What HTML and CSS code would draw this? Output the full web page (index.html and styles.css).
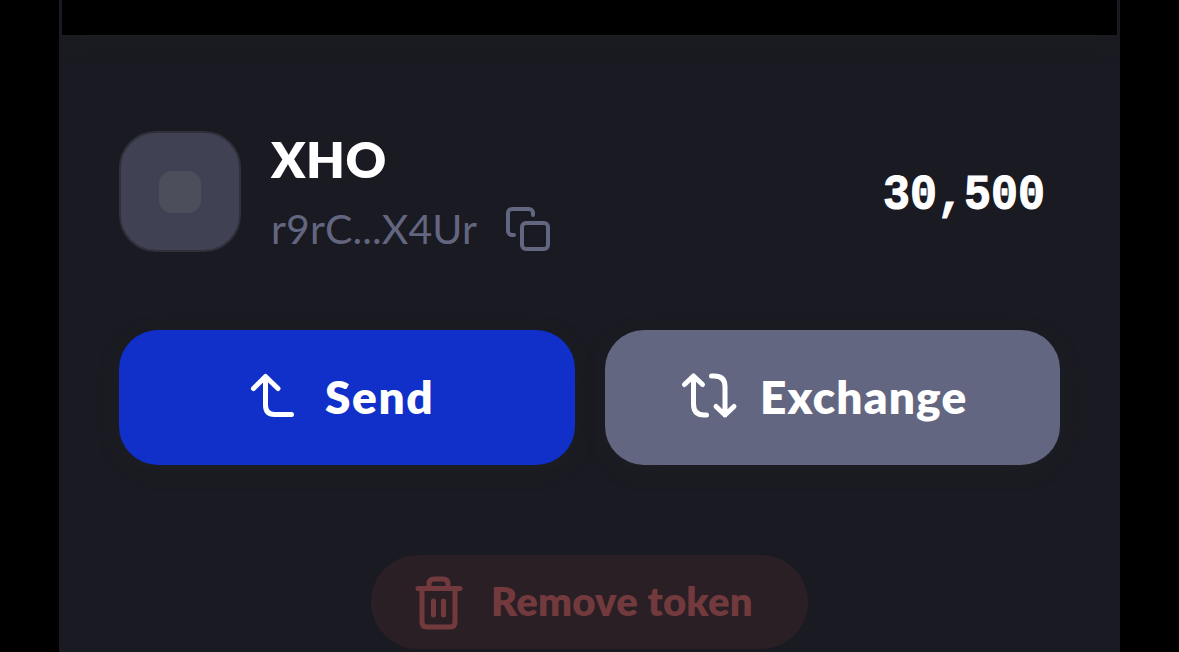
FILE: index.html
```html
<!DOCTYPE html>
<html lang="en">
<head>
    <meta charset="UTF-8">
    <meta name="viewport" content="width=device-width, initial-scale=1.0">
    <title>XHO</title>
    <link rel="stylesheet" href="styles.css">
</head>
<body>
    <div class="panel">
        <div class="preview"></div>

        <div class="token">
            <div class="avatar"><div class="avatar-dot"></div></div>
            <div class="token-info">
                <div class="token-name">XHO</div>
                <div class="token-address">
                    <span class="address">r9rC...X4Ur</span>
                    <svg class="copy-icon" width="46" height="46" viewBox="0 0 46 46">
                        <path d="M28 9V7a4 4 0 0 0-4-4H7a4 4 0 0 0-4 4v18a4 4 0 0 0 4 4h2"/>
                        <rect x="17" y="17" width="26" height="26" rx="4"/>
                    </svg>
                </div>
            </div>
            <div class="balance">30,500</div>
        </div>

        <div class="actions">
            <button class="btn btn-send">
                <svg width="44" height="46" viewBox="0 0 44 46">
                    <path d="M3.500 15.500L15.500 3.500L28 15.500M15.500 3.500V32Q15.500 41.500 24.500 41.500H41.500"/>
                </svg>
                <span class="send-text">Send</span>
            </button>
            <button class="btn btn-exchange">
                <svg width="54" height="46" viewBox="0 0 54 46">
                    <path d="M2.500 11.500L11.500 3L20.500 11.500M11.500 3V31Q11.500 42 22 42H24.500"/>
                    <path d="M29.500 3H32Q43 3 43 13.500V42M34 33.500L43 42L52 33.500"/>
                </svg>
                <span class="exchange-text">Exchange</span>
            </button>
        </div>

        <button class="btn-remove">
            <svg width="48" height="54" viewBox="0 0 48 54">
                <path d="M3 14.500H45"/>
                <path d="M14 13.500V10Q14 5 19 5H28Q33 5 33 10V13.500"/>
                <path d="M7 14.500V48Q7 53 12 53H35Q40 53 40 48V14.500"/>
                <path d="M18.500 27V41M28.500 27V41"/>
            </svg>
            <span class="remove-text">Remove token</span>
        </button>
    </div>
</body>
</html>
```
FILE: styles.css
```css
* {
    box-sizing: border-box;
}
body {
    margin: 0;
    height: 652px;
    overflow: hidden;
    background-color: #000000;
    font-family: 'Lato', sans-serif;
}
.panel {
    width: 1061px;
    height: 652px;
    margin-left: 59px;
    padding: 0 3px;
    overflow: hidden;
    background-color: #1a1a22;
    display: flex;
    flex-direction: column;
}
.preview {
    flex: none;
    height: 35px;
    background-color: #000000;
    box-shadow: 0 6px 20px rgba(28, 32, 30, 0.7);
}
.token {
    display: flex;
    height: 121px;
    margin: 96px 72px 0 57px;
}
.avatar {
    display: flex;
    align-items: center;
    justify-content: center;
    width: 122px;
    height: 121px;
    border: 2px solid #2e303a;
    border-radius: 37px;
    background-color: #404152;
}
.avatar-dot {
    width: 42px;
    height: 42px;
    border-radius: 13px;
    background-color: #4c4e5b;
}
.token-info {
    margin-left: 30px;
    flex: 1;
}
.token-name {
    height: 60px;
    line-height: 57px;
    color: #ffffff;
    font-size: 50px;
    font-weight: 800;
    letter-spacing: 0.6px;
}
.token-address {
    display: flex;
    align-items: center;
    height: 46px;
    margin-top: 15px;
    color: #636680;
    font-size: 41px;
}
.address {
    width: 205px;
    padding-bottom: 2px;
    white-space: nowrap;
    letter-spacing: 0.1px;
}
.copy-icon {
    margin-left: 29px;
}
svg {
    flex: none;
    overflow: visible;
    fill: none;
    stroke: currentColor;
    stroke-width: 4;
    stroke-linecap: round;
    stroke-linejoin: round;
}
.balance {
    align-self: center;
    margin-top: 11px;
    color: #ffffff;
    font-family: 'Liberation Mono', monospace;
    font-size: 45px;
    font-weight: 700;
    line-height: 60px;
    /* taller, narrow digits */
    transform: scaleY(1.1);
    -webkit-text-stroke: 1px #ffffff;
}
.actions {
    display: flex;
    gap: 30px;
    height: 135px;
    margin: 78px 57px 0;
}
.btn {
    display: flex;
    align-items: center;
    width: 455px;
    padding: 0 0 3px;
    border: none;
    border-radius: 39px;
    color: #ffffff;
    font-family: 'Lato', sans-serif;
    font-size: 46px;
    font-weight: 800;
    box-shadow: 0 5px 18px rgba(32, 38, 38, 0.5);
}
.btn svg {
    stroke-width: 5;
}
.btn-send {
    width: 456px;
    padding-left: 131px;
    background-color: #112fc9;
}
.btn-exchange {
    padding-left: 77px;
    background-color: #636680;
}
.send-text {
    margin-left: 31px;
    letter-spacing: 1.6px;
}
.exchange-text {
    margin-left: 24px;
    letter-spacing: 1.2px;
}
.btn-remove {
    display: flex;
    align-items: center;
    align-self: center;
    width: 437px;
    height: 94px;
    margin-top: 90px;
    padding: 0 0 2px 44px;
    border: none;
    border-radius: 47px;
    background-color: #2b1f26;
    color: #733a3e;
    font-family: 'Lato', sans-serif;
    font-size: 40px;
    font-weight: 800;
}
.btn-remove svg {
    stroke-width: 5;
}
.remove-text {
    margin-left: 28px;
    white-space: nowrap;
    letter-spacing: 0.25px;
}
```
